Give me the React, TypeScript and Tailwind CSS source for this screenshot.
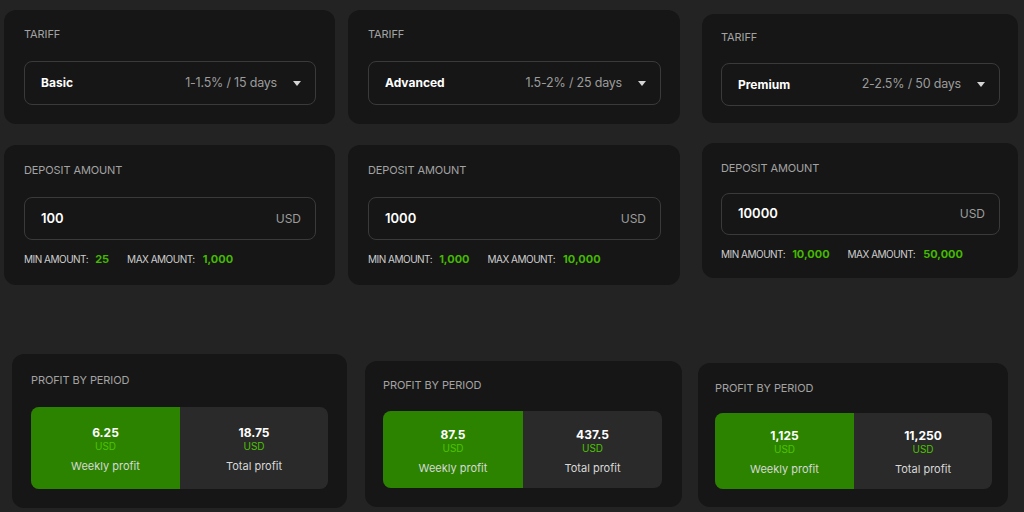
import React from "react";

type Plan = {
  name: string;
  rate: string;
  deposit: string;
  min: string;
  max: string;
  weekly: string;
  total: string;
};

const plans: Plan[] = [
  { name: "Basic", rate: "1-1.5% / 15 days", deposit: "100", min: "25", max: "1,000", weekly: "6.25", total: "18.75" },
  { name: "Advanced", rate: "1.5-2% / 25 days", deposit: "1000", min: "1,000", max: "10,000", weekly: "87.5", total: "437.5" },
  { name: "Premium", rate: "2-2.5% / 50 days", deposit: "10000", min: "10,000", max: "50,000", weekly: "1,125", total: "11,250" },
];

function Caret() {
  return (
    <svg width="8" height="5" viewBox="0 0 8 5" className="shrink-0">
      <path d="M0 0h8L4 5z" fill="#d4d4d4" />
    </svg>
  );
}

function Label({ children }: { children: React.ReactNode }) {
  return <div className="text-[11px] leading-[14px] uppercase text-[#a3a3a3] tracking-[-0.1px]">{children}</div>;
}

function TariffCard({ plan, className, selectClass }: { plan: Plan; className: string; selectClass: string }) {
  return (
    <div className={`bg-[#161616] rounded-[12px] flex flex-col ${className}`}>
      <Label>Tariff</Label>
      <div className={`border border-[#3a3a3a] rounded-[8px] flex items-center pl-[16px] pr-[14px] ${selectClass}`}>
        <span className="text-[12px] font-bold text-white">{plan.name}</span>
        <span className="ml-auto text-[12.5px] text-[#9c9c9c] mr-[16px] tracking-[-0.2px]">{plan.rate}</span>
        <Caret />
      </div>
    </div>
  );
}

function DepositCard({ plan, className, inputClass }: { plan: Plan; className: string; inputClass: string }) {
  return (
    <div className={`bg-[#161616] rounded-[12px] flex flex-col ${className}`}>
      <Label>Deposit amount</Label>
      <div className={`border border-[#3a3a3a] rounded-[8px] flex items-center pl-[16px] pr-[14px] ${inputClass}`}>
        <span className="text-[13px] font-semibold text-white">{plan.deposit}</span>
        <span className="ml-auto text-[12px] text-[#9c9c9c]">USD</span>
      </div>
      <div className="flex items-center text-[10px] uppercase mt-[13px] leading-[12px]">
        <span className="text-[#cfcfcf] tracking-[-0.5px]">Min amount:</span>
        <span className="ml-[7px] text-[#45b800] font-bold text-[11px]">{plan.min}</span>
        <span className="ml-[18px] text-[#cfcfcf] tracking-[-0.5px]">Max amount:</span>
        <span className="ml-[8px] text-[#45b800] font-bold text-[11px]">{plan.max}</span>
      </div>
    </div>
  );
}

function Stat({ value, caption }: { value: string; caption: string }) {
  return (
    <div className="flex flex-col items-center">
      <span className="text-[12px] font-bold text-white leading-[14px]">{value}</span>
      <span className="text-[10px] text-[#4cc400] leading-[12px]">USD</span>
      <span className="text-[11px] text-[#d8d8d8] leading-[14px] mt-[7px]">{caption}</span>
    </div>
  );
}

function ProfitCard({ plan, className, boxClass, greenClass }: { plan: Plan; className: string; boxClass: string; greenClass: string }) {
  return (
    <div className={`bg-[#161616] rounded-[12px] flex flex-col ${className}`}>
      <Label>Profit by period</Label>
      <div className={`flex rounded-[8px] overflow-hidden bg-[#2a2a2a] ${boxClass}`}>
        <div className={`bg-[#2c8300] flex items-center justify-center pt-[3px] ${greenClass}`}>
          <Stat value={plan.weekly} caption="Weekly profit" />
        </div>
        <div className="flex-1 flex items-center justify-center pt-[3px]">
          <Stat value={plan.total} caption="Total profit" />
        </div>
      </div>
    </div>
  );
}

export default function App() {
  return (
    <div className="w-[1024px] h-[512px] bg-[#232323] overflow-hidden flex flex-col" style={{ fontFamily: "Inter, 'Noto Sans', sans-serif" }}>
      <div className="flex items-start h-[285px]">
        <div className="ml-[4px] w-[331px] pt-[10px] flex flex-col">
          <TariffCard plan={plans[0]} className="h-[114px] pl-[20px] pr-[19px] pt-[17px]" selectClass="mt-[20px] h-[44px]" />
          <DepositCard plan={plans[0]} className="mt-[21px] h-[140px] pl-[20px] pr-[19px] pt-[18px]" inputClass="mt-[20px] h-[43px]" />
        </div>
        <div className="ml-[13px] w-[332px] pt-[10px] flex flex-col">
          <TariffCard plan={plans[1]} className="h-[114px] pl-[20px] pr-[19px] pt-[17px]" selectClass="mt-[20px] h-[44px]" />
          <DepositCard plan={plans[1]} className="mt-[21px] h-[140px] pl-[20px] pr-[19px] pt-[18px]" inputClass="mt-[20px] h-[43px]" />
        </div>
        <div className="ml-[22px] w-[316px] pt-[14px] flex flex-col">
          <TariffCard plan={plans[2]} className="h-[109px] pl-[19px] pr-[18px] pt-[16px]" selectClass="mt-[19px] h-[43px]" />
          <DepositCard plan={plans[2]} className="mt-[20px] h-[135px] pl-[19px] pr-[18px] pt-[18px]" inputClass="mt-[18px] h-[42px]" />
        </div>
      </div>
      <div className="flex items-start">
        <ProfitCard
          plan={plans[0]}
          className="ml-[12px] mt-[69px] w-[335px] h-[154px] pl-[19px] pr-[19px] pt-[19px]"
          boxClass="mt-[20px] h-[82px]"
          greenClass="w-[149px]"
        />
        <ProfitCard
          plan={plans[1]}
          className="ml-[18px] mt-[76px] w-[317px] h-[146px] pl-[18px] pr-[20px] pt-[17px]"
          boxClass="mt-[19px] h-[77px]"
          greenClass="w-[140px]"
        />
        <ProfitCard
          plan={plans[2]}
          className="ml-[16px] mt-[78px] w-[310px] h-[144px] pl-[17px] pr-[16px] pt-[18px]"
          boxClass="mt-[18px] h-[76px]"
          greenClass="w-[139px]"
        />
      </div>
    </div>
  );
}
